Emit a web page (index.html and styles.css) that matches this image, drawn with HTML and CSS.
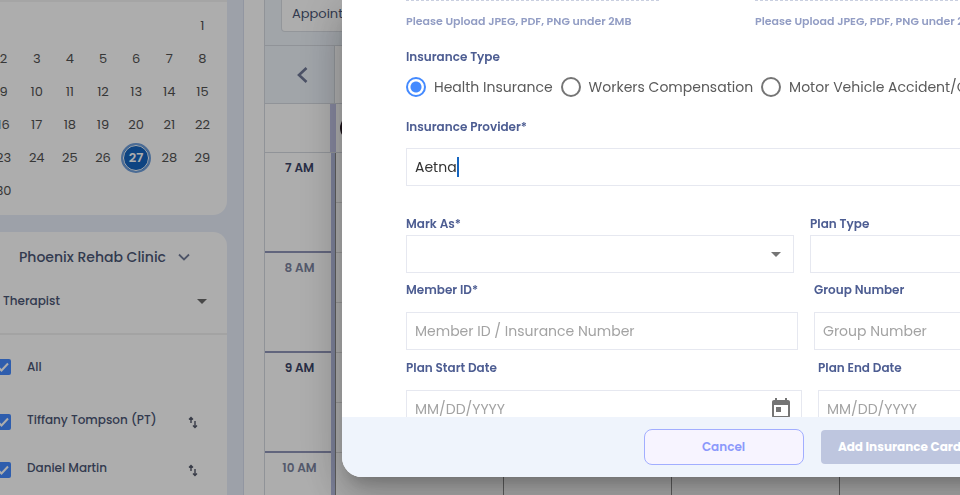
FILE: index.html
```html
<!DOCTYPE html>
<html lang="en">
<head>
    <meta charset="UTF-8">
    <meta name="viewport" content="width=device-width, initial-scale=1.0">
    <title>Add Insurance Card</title>
    <link rel="stylesheet" href="styles.css">
</head>
<body>
    <div class="app">
        <aside class="sidebar">
            <div class="card calendar-card">
                <table class="calendar">
                    <tr><td></td><td></td><td></td><td></td><td></td><td></td><td>1</td></tr>
                    <tr><td>2</td><td>3</td><td>4</td><td>5</td><td>6</td><td>7</td><td>8</td></tr>
                    <tr><td>9</td><td>10</td><td>11</td><td>12</td><td>13</td><td>14</td><td>15</td></tr>
                    <tr><td>16</td><td>17</td><td>18</td><td>19</td><td>20</td><td>21</td><td>22</td></tr>
                    <tr><td>23</td><td>24</td><td>25</td><td>26</td><td><span class="today">27</span></td><td>28</td><td>29</td></tr>
                    <tr><td>30</td><td></td><td></td><td></td><td></td><td></td><td></td></tr>
                </table>
            </div>
            <div class="card filter-card">
                <button class="clinic">
                    Phoenix Rehab Clinic
                    <svg width="12" height="8" viewBox="0 0 12 8"><path d="M1 1.500l5 5 5-5" fill="none" stroke="#737d99" stroke-width="1.800"/></svg>
                </button>
                <button class="role">
                    Therapist
                    <svg width="10" height="5" viewBox="0 0 10 5"><path d="M0 0h10L5 5z" fill="#6b6b6b"/></svg>
                </button>
                <ul class="people">
                    <li class="all">
                        <input type="checkbox" id="p-all" checked>
                        <label for="p-all">All</label>
                    </li>
                    <li>
                        <input type="checkbox" id="p-tiffany" checked>
                        <label for="p-tiffany">Tiffany Tompson (PT)</label>
                        <button class="swap" aria-label="Reorder">
                            <svg width="10" height="13" viewBox="0 0 10 13"><path d="M3 7V1.500M1 3.500l2-2 2 2M7 5v6.500M5 9.500l2 2 2-2" fill="none" stroke="#54596b" stroke-width="1.400"/></svg>
                        </button>
                    </li>
                    <li>
                        <input type="checkbox" id="p-daniel" checked>
                        <label for="p-daniel">Daniel Martin</label>
                        <button class="swap" aria-label="Reorder">
                            <svg width="10" height="13" viewBox="0 0 10 13"><path d="M3 7V1.500M1 3.500l2-2 2 2M7 5v6.500M5 9.500l2 2 2-2" fill="none" stroke="#54596b" stroke-width="1.400"/></svg>
                        </button>
                    </li>
                </ul>
            </div>
        </aside>

        <main class="schedule">
            <div class="toolbar">
                <button class="view-button">Appointments</button>
            </div>
            <div class="week-nav">
                <button class="prev" aria-label="Previous week">
                    <svg width="11" height="16" viewBox="0 0 11 16"><path d="M9.500 1L2 8l7.500 7" fill="none" stroke="#6f7896" stroke-width="2.600"/></svg>
                </button>
            </div>
            <div class="day-head">
                <span class="avatar"></span>
            </div>
            <div class="grid">
                <div class="hours">
                    <div class="hour">7 AM</div>
                    <div class="hour even">8 AM</div>
                    <div class="hour">9 AM</div>
                    <div class="hour even">10 AM</div>
                </div>
                <div class="day"></div>
                <div class="day"></div>
                <div class="day"></div>
                <div class="day"></div>
            </div>
        </main>
    </div>

    <div class="overlay">
        <form class="modal" role="dialog" aria-label="Add Insurance Card">
            <div class="modal-body">
                <div class="uploads">
                    <p class="upload">Please Upload JPEG, PDF, PNG under 2MB</p>
                    <p class="upload">Please Upload JPEG, PDF, PNG under 2MB</p>
                </div>

                <fieldset class="types">
                    <legend>Insurance Type</legend>
                    <div class="radios">
                        <label><input type="radio" name="type" checked>Health Insurance</label>
                        <label><input type="radio" name="type">Workers Compensation</label>
                        <label><input type="radio" name="type">Motor Vehicle Accident/Other</label>
                    </div>
                </fieldset>

                <div class="field provider">
                    <label for="provider">Insurance Provider*</label>
                    <div class="box">
                        <input type="text" id="provider" value="Aetna">
                        <span class="caret"></span>
                    </div>
                </div>

                <div class="row selects">
                    <div class="field tight">
                        <label for="mark">Mark As*</label>
                        <div class="box">
                            <select id="mark"><option></option><option>Primary</option><option>Secondary</option></select>
                            <svg class="arrow" width="10" height="5" viewBox="0 0 10 5"><path d="M0 0h10L5 5z" fill="#757575"/></svg>
                        </div>
                    </div>
                    <div class="field tight">
                        <label for="plan">Plan Type</label>
                        <div class="box">
                            <select id="plan"><option></option><option>PPO</option><option>HMO</option></select>
                            <svg class="arrow" width="10" height="5" viewBox="0 0 10 5"><path d="M0 0h10L5 5z" fill="#757575"/></svg>
                        </div>
                    </div>
                </div>

                <div class="row ids">
                    <div class="field">
                        <label for="member">Member ID*</label>
                        <div class="box"><input type="text" id="member" placeholder="Member ID / Insurance Number"></div>
                    </div>
                    <div class="field">
                        <label for="group">Group Number</label>
                        <div class="box"><input type="text" id="group" placeholder="Group Number"></div>
                    </div>
                </div>

                <div class="row">
                    <div class="field">
                        <label for="start">Plan Start Date</label>
                        <div class="box">
                            <input type="text" id="start" placeholder="MM/DD/YYYY">
                            <button type="button" class="date-button" aria-label="Open calendar">
                                <svg width="24" height="24" viewBox="0 0 24 24"><path fill="#757575" d="M19 3h-1V1h-2v2H8V1H6v2H5c-1.110 0-1.990.9-1.990 2L3 19c0 1.100.89 2 2 2h14c1.100 0 2-.9 2-2V5c0-1.100-.9-2-2-2zm0 16H5V8h14v11zM7 10h5v5H7z"/></svg>
                            </button>
                        </div>
                    </div>
                    <div class="field">
                        <label for="end">Plan End Date</label>
                        <div class="box">
                            <input type="text" id="end" placeholder="MM/DD/YYYY">
                            <button type="button" class="date-button" aria-label="Open calendar">
                                <svg width="24" height="24" viewBox="0 0 24 24"><path fill="#757575" d="M19 3h-1V1h-2v2H8V1H6v2H5c-1.110 0-1.990.9-1.990 2L3 19c0 1.100.89 2 2 2h14c1.100 0 2-.9 2-2V5c0-1.100-.9-2-2-2zm0 16H5V8h14v11zM7 10h5v5H7z"/></svg>
                            </button>
                        </div>
                    </div>
                </div>
            </div>
            <div class="modal-footer">
                <button type="button" class="cancel">Cancel</button>
                <button type="button" class="submit" disabled>Add Insurance Card</button>
            </div>
        </form>
    </div>
</body>
</html>
```

FILE: styles.css
```css
* {
    box-sizing: border-box;
}
body {
    margin: 0;
    height: 100vh;
    overflow: hidden;
    font-family: Poppins, Inter, sans-serif;
    font-size: 12px;
    color: #4b5675;
}
button,
input,
select {
    font: inherit;
    color: inherit;
    border: none;
    background: none;
    padding: 0;
    margin: 0;
}
svg {
    display: block;
}
.app {
    display: flex;
    height: 100vh;
    overflow: hidden;
    background-color: #ffffff;
}

/* sidebar */
.sidebar {
    flex: none;
    width: 244px;
    padding-right: 16px;
    display: flex;
    flex-direction: column;
    align-items: flex-end;
    gap: 17px;
    overflow: hidden;
    background-color: #e8eefa;
    border-right: 1px solid #d7deee;
}
.card {
    flex: none;
    width: 248px;
    background-color: #ffffff;
}
.calendar-card {
    padding: 7px 8px 8px;
    border-top: 2px solid #f3f3f3;
    border-radius: 0 0 14px 14px;
}
.calendar {
    width: 232px;
    table-layout: fixed;
    border-collapse: collapse;
    font-size: 13px;
    color: #525252;
}
.calendar td {
    height: 33px;
    padding: 0;
    text-align: center;
}
.today {
    display: block;
    width: 30px;
    height: 30px;
    margin: 0 auto;
    line-height: 24px;
    border: 2px solid #6f9fdc;
    outline: 1px solid #ffffff;
    outline-offset: -3px;
    padding: 1px;
    border-radius: 50%;
    background-color: #1565c0;
    color: #ffffff;
    font-weight: 600;
}
.filter-card {
    height: 400px;
    padding-left: 21px;
    border-radius: 14px;
}
.clinic {
    display: flex;
    align-items: center;
    gap: 12px;
    height: 50px;
    padding-left: 19px;
    font-size: 14px;
    font-weight: 500;
}
.role {
    display: flex;
    align-items: center;
    justify-content: space-between;
    width: 100%;
    height: 38px;
    padding: 0 20px 0 3px;
    font-weight: 500;
}
.people {
    list-style: none;
    margin: 13px 0 0 -21px;
    padding: 17px 29px 0 16px;
    border-top: 2px solid #f0f0f0;
}
.people li {
    display: flex;
    align-items: center;
    gap: 16px;
    height: 48px;
    font-weight: 500;
}
.people .all {
    height: 30px;
    margin-bottom: 16px;
}
.people input {
    appearance: none;
    flex: none;
    width: 16px;
    height: 16px;
    border-radius: 2px;
    background: #448aff url("data:image/svg+xml,%3Csvg xmlns='http://www.w3.org/2000/svg' viewBox='0 0 16 16'%3E%3Cpath d='M3 8l3.500 3.500L13 4.500' fill='none' stroke='white' stroke-width='2'/%3E%3C/svg%3E");
}
.people label {
    flex: 1;
    padding-bottom: 5px;
}
.people .all label {
    padding-bottom: 0;
}

/* schedule */
.schedule {
    flex: 1;
    min-width: 0;
    margin-left: 20px;
    border-left: 1px solid #d5d9e0;
    display: flex;
    flex-direction: column;
    overflow: hidden;
}
.toolbar {
    flex: none;
    height: 46px;
    padding-left: 16px;
    background-color: #edf3fa;
    border-bottom: 1px solid #d5d9e0;
}
.view-button {
    height: 32px;
    padding: 0 10px 4px;
    background-color: #ffffff;
    border: 1px solid #d9dde4;
    border-top: none;
    border-radius: 0 0 4px 4px;
    font-size: 13px;
}
.week-nav {
    flex: none;
    height: 58px;
    border-bottom: 1px solid #d5d9e0;
}
.prev {
    width: 70px;
    height: 100%;
    padding-left: 32px;
    background-color: #edf3fa;
    border-right: 1px solid #d5d9e0;
}
.day-head {
    flex: none;
    height: 49px;
    display: flex;
    align-items: center;
    border-bottom: 1px solid #d5d9e0;
}
.day-head::before {
    content: "";
    width: 6px;
    height: 100%;
    margin-left: 65px;
    background-color: #c4c6e8;
}
.avatar {
    width: 24px;
    height: 24px;
    margin-left: 4px;
    border-radius: 50%;
    background-color: #2b1d26;
}
.grid {
    flex: 1;
    display: flex;
}
.hours {
    flex: none;
    width: 71px;
    border-right: 1px solid #8a8a8a;
    background: linear-gradient(to left, #b6bde0 4px, transparent 4px);
}
.hour {
    height: 100px;
    margin-right: 4px;
    padding: 5px 0 0 3px;
    border-bottom: 2px solid #9095b8;
    line-height: 20px;
    text-align: center;
    font-weight: 600;
    color: #3c4568;
}
.hour.even {
    color: #7c849f;
}
.day {
    flex: none;
    width: 168px;
    border-right: 1px solid #8a8a8a;
    background: repeating-linear-gradient(transparent 0 49px, #dddddd 49px 50px);
}

/* modal */
.overlay {
    position: fixed;
    inset: 0;
    display: flex;
    padding: 0 0 18px 342px;
    background-color: rgba(0, 0, 0, 0.32);
    overflow: hidden;
}
.modal {
    flex: 1;
    min-width: 0;
    margin-right: -320px;
    display: flex;
    flex-direction: column;
    overflow: hidden;
    background-color: #ffffff;
    border-radius: 0 0 20px 20px;
    box-shadow: 0 11px 15px -7px rgba(0, 0, 0, 0.2),
        0 24px 38px 3px rgba(0, 0, 0, 0.14),
        0 9px 46px 8px rgba(0, 0, 0, 0.12);
}
.modal-body {
    flex: 1;
    min-height: 0;
    overflow: hidden;
    padding: 0 66px 0 64px;
}
.uploads {
    display: flex;
    gap: 96px;
}
.upload {
    width: 253px;
    margin: 0;
    padding-top: 10px;
    border-top: 1px dashed #c9cfe0;
    font-size: 11px;
    line-height: 20px;
    font-weight: 600;
    color: #929dc4;
    white-space: nowrap;
}
.types {
    margin: 16px 0 0;
    padding: 0;
    border: none;
}
.types legend,
.field label {
    display: block;
    padding: 0;
    height: 20px;
    line-height: 20px;
    font-size: 12px;
    font-weight: 600;
    color: #4d5d92;
}
.radios {
    display: flex;
    gap: 8px;
    padding-top: 10px;
}
.radios label {
    display: flex;
    align-items: center;
    gap: 8px;
    height: 20px;
    font-size: 14px;
    color: #5a5a5a;
    white-space: nowrap;
}
.radios input {
    appearance: none;
    width: 20px;
    height: 20px;
    border: 2px solid #757575;
    border-radius: 50%;
}
.radios input:checked {
    border-color: #448aff;
    background: radial-gradient(circle, #448aff 5px, transparent 6px);
}
.provider {
    margin: 20px 0 28px;
}
.row {
    display: flex;
    gap: 16px;
    margin-bottom: 8px;
}
.row.selects {
    padding-right: 16px;
    margin-bottom: 7px;
}
.row.ids {
    padding-right: 8px;
}
.row .field {
    flex: 1;
    min-width: 0;
}
.box {
    display: flex;
    align-items: center;
    height: 38px;
    margin-top: 12px;
    padding: 0 8px;
    border: 1px solid #e6e8f0;
    font-size: 14px;
    color: #333333;
}
.provider .box {
    margin-top: 11px;
}
.tight .box {
    margin-top: 1px;
}
.box input,
.box select {
    flex: 1;
    min-width: 0;
    height: 100%;
    outline: none;
}
.box select {
    appearance: none;
}
.box input::placeholder {
    color: #a3a3a3;
}
.box #provider {
    flex: none;
    field-sizing: content;
}
.caret {
    width: 2px;
    height: 20px;
    background-color: #1565c0;
}
.arrow {
    margin-right: 4px;
}
.modal-footer {
    flex: none;
    display: flex;
    justify-content: center;
    align-items: center;
    gap: 17px;
    height: 60px;
    background-color: #eff4fc;
    font-size: 12px;
    font-weight: 600;
}
.cancel {
    width: 160px;
    height: 36px;
    border: 1px solid #a2aeff;
    border-radius: 8px;
    background-color: #f7f4ff;
    color: #8b98fb;
}
.submit {
    width: 158px;
    height: 34px;
    border-radius: 4px;
    background-color: #bec6df;
    color: #ffffff;
    font-weight: 700;
}
```
